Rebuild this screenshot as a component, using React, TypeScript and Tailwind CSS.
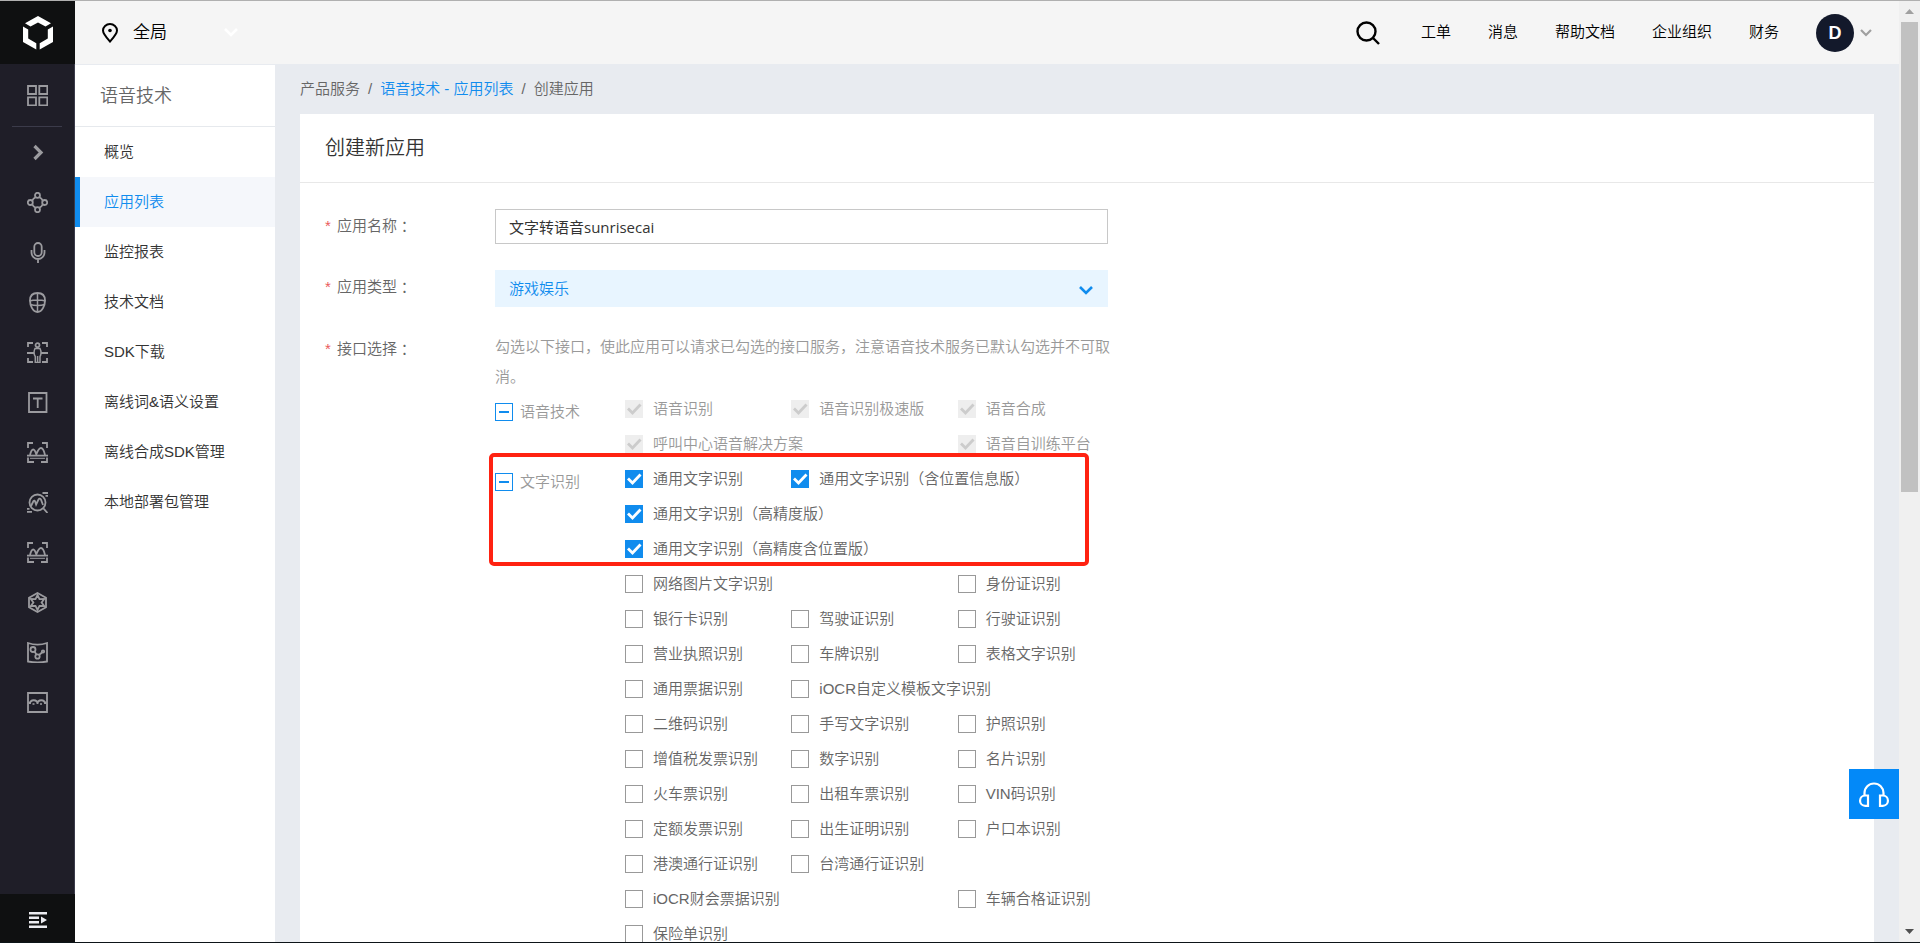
import React, { useState } from 'react';
import clsx from 'clsx';

const topLinks = ['工单', '消息', '帮助文档', '企业组织', '财务'];

const menuItems = [
  '概览',
  '应用列表',
  '监控报表',
  '技术文档',
  'SDK下载',
  '离线词&语义设置',
  '离线合成SDK管理',
  '本地部署包管理',
];

type Option = { name: string; span?: number };

const speechOptions: Option[] = [
  { name: '语音识别' },
  { name: '语音识别极速版' },
  { name: '语音合成' },
  { name: '呼叫中心语音解决方案', span: 2 },
  { name: '语音自训练平台' },
];

const ocrOptions: Option[] = [
  { name: '通用文字识别' },
  { name: '通用文字识别（含位置信息版）', span: 2 },
  { name: '通用文字识别（高精度版）', span: 3 },
  { name: '通用文字识别（高精度含位置版）', span: 3 },
  { name: '网络图片文字识别', span: 2 },
  { name: '身份证识别' },
  { name: '银行卡识别' },
  { name: '驾驶证识别' },
  { name: '行驶证识别' },
  { name: '营业执照识别' },
  { name: '车牌识别' },
  { name: '表格文字识别' },
  { name: '通用票据识别' },
  { name: 'iOCR自定义模板文字识别', span: 2 },
  { name: '二维码识别' },
  { name: '手写文字识别' },
  { name: '护照识别' },
  { name: '增值税发票识别' },
  { name: '数字识别' },
  { name: '名片识别' },
  { name: '火车票识别' },
  { name: '出租车票识别' },
  { name: 'VIN码识别' },
  { name: '定额发票识别' },
  { name: '出生证明识别' },
  { name: '户口本识别' },
  { name: '港澳通行证识别' },
  { name: '台湾通行证识别', span: 2 },
  { name: 'iOCR财会票据识别', span: 2 },
  { name: '车辆合格证识别' },
  { name: '保险单识别', span: 3 },
];

const scanCorners = 'M1 5V1h5M15 1h5v4M1 16v4h5M15 20h5v-4';

const ImageScan = (
  <>
    <path d="M1 6V1h5M15 1h5v5M1 15.5V20h6M14 20h6v-4.500" />
    <path d="M0 13.600h21" />
    <path d="M3 13c1-4 2-5.500 3.200-5.500S8.500 9.500 9.500 13M9.500 12c1.500-4 3-6 4.500-6s3 2.500 4 7" />
    <path d="M3 16.300h15" strokeWidth="1" />
  </>
);

// 21x21 icons of the product rail, top to bottom
const railIcons: { label: string; icon: React.ReactNode }[] = [
  {
    label: '知识图谱',
    icon: (
      <>
        <circle cx="10.5" cy="3.300" r="2.500" />
        <circle cx="10.5" cy="17.700" r="2.500" />
        <circle cx="3.300" cy="10.5" r="2.500" />
        <circle cx="17.700" cy="10.5" r="2.500" />
        <path d="M8.600 5.200C7 6 6 7 5.200 8.600M12.400 5.200c1.600.8 2.600 1.800 3.400 3.400M5.200 12.400c.8 1.600 1.800 2.600 3.400 3.400M15.800 12.400c-.8 1.600-1.800 2.600-3.400 3.400" />
      </>
    ),
  },
  {
    label: '语音技术',
    icon: (
      <>
        <rect x="7.300" y="1" width="7.400" height="13" rx="3.700" />
        <path d="M4.500 8v2.500a6.500 6.500 0 0 0 13 0V8M11 17v4" />
      </>
    ),
  },
  {
    label: '人脸识别',
    icon: (
      <>
        <path d="M10.500 1C5.500 1 3 4 3 8.500S5.500 20 10.500 20 18 13 18 8.500 15.500 1 10.500 1Z" />
        <path d="M10.500 1v19M2.500 9c4-1.500 12-1.500 16 0M3.500 12.500c3.500 1.200 10.500 1.200 14 0" strokeWidth="1.500" />
      </>
    ),
  },
  {
    label: '人体分析',
    icon: (
      <>
        <path d={scanCorners} />
        <path d="M0 11h7M14 11h7" />
        <circle cx="10.500" cy="3.200" r="2" />
        <path d="M8 6.500h5c1.200 2.500 1.200 6 0 8.200V20.500H8.300v-5.800c-1.500-2.500-1.500-5.700-.3-8.200ZM10.600 14v6" strokeWidth="1.500" />
      </>
    ),
  },
  {
    label: '文字识别',
    icon: (
      <>
        <path d="M2 1h17.500v19H2zM6 6.500h9.500M10.700 6.500V16" />
      </>
    ),
  },
  { label: '图像识别', icon: ImageScan },
  {
    label: '图像搜索',
    icon: (
      <>
        <circle cx="10.500" cy="10.500" r="8" />
        <path d="M16.500 16.500 20.500 21M15.500 1H21M18.500 3.800H21M0 16.800h2.500M0 19.800h5" />
        <path d="M4 14l2.500-5c.6-.8 1.300-.4 1.600.5l1 3L11.500 7.500c.8-1.300 2-1 2.500.2l2 5.300" />
      </>
    ),
  },
  { label: '图像审核', icon: ImageScan },
  {
    label: '智能创作',
    icon: (
      <>
        <path d="M10.500 1 19 5.800v9.400L10.500 20 2 15.200V5.800Z" />
        <path d="m10.500 3 2 4.200 4.700-.2-2.600 3.500 2.600 3.500-4.700-.2-2 4.200-2-4.200-4.700.2 2.600-3.500L3.800 7l4.700.2Z" strokeWidth="1.800" />
      </>
    ),
  },
  {
    label: '机器学习',
    icon: (
      <>
        <path d="M1 1c6 2 13 2 19 0v18.500c-6 1.200-13 1.200-19 0Z" />
        <circle cx="6" cy="7.500" r="2.500" />
        <circle cx="10.500" cy="14.500" r="2.200" />
        <circle cx="16" cy="9.500" r="1.200" />
        <path d="m7.500 9.500 2 3M12 13l3-2.500" />
      </>
    ),
  },
  {
    label: '视频技术',
    icon: (
      <>
        <path d="M1 1h19v19H1z" />
        <path d="M1.500 10.500c1 0 1.500.5 1.500 1.500 0-5 7.500-5 7.500 0 0-5 7.500-5 7.500 0 0-1 .5-1.500 1.500-1.500" />
        <path d="M5.500 12h2M13 12h2" strokeWidth="1.500" />
      </>
    ),
  },
];

function Rail() {
  return (
    <nav className="flex w-[75px] shrink-0 flex-col bg-[#1f1e28] text-[#9b9b9f]">
      <a href="#" aria-label="首页" className="flex h-[63px] shrink-0 items-center justify-center bg-[#0f1011]">
        <svg width="30" height="34" viewBox="0 0 30 34" fill="#fff">
          <path d="M15 0 28 7.200 22.500 10.500 15 6.500 7.500 10.500 2 7.200Z" />
          <path d="M0 10.500 5.200 13.500V22.500L13.300 27.200V33.500L0 26Z" />
          <path d="M30 10.500 24.800 13.500V22.500L16.700 27.200V33.500L30 26Z" />
        </svg>
      </a>
      <div className="flex grow flex-col items-center border-r border-[#3b3b4a]">
        <button aria-label="全部产品" className="flex h-[62px] items-center">
          <svg width="21" height="21" viewBox="0 0 21 21" fill="none" stroke="currentColor" strokeWidth="1.800">
            <path d="M1 1h8v8H1zM12.300 1h8v8h-8zM1 12.300h8v8H1zM12.300 12.300h8v8h-8z" />
          </svg>
        </button>
        <div className="h-px w-[50px] bg-[#3b3b4a]" />
        <button aria-label="展开" className="flex h-[50px] items-center">
          <svg width="21" height="21" viewBox="0 0 21 21" fill="none" stroke="currentColor" strokeWidth="3.200">
            <path d="m7.500 4 6.500 6.500L7.500 17" />
          </svg>
        </button>
        {railIcons.map((item) => (
          <a key={item.label} href="#" aria-label={item.label} className="flex h-[50px] items-center">
            <svg width="21" height="21" viewBox="0 0 21 21" fill="none" stroke="currentColor" strokeWidth="1.800">
              {item.icon}
            </svg>
          </a>
        ))}
      </div>
      <button aria-label="展开导航" className="flex h-12 shrink-0 items-center justify-center bg-[#0f1011] pt-1">
        <svg width="18" height="16" viewBox="0 0 18 16" fill="#ebebf0">
          <path d="M0 0h18v2.600H0zM0 4.500h10v2.600H0zM0 8.900h10v2.600H0zM0 13.400h18V16H0zM12 4.500 18 8l-6 3.500z" />
        </svg>
      </button>
    </nav>
  );
}

function Chevron({ className }: { className?: string }) {
  return (
    <svg width="14" height="9" viewBox="0 0 14 9" fill="none" stroke="currentColor" strokeWidth="2.600" className={className}>
      <path d="m1 1 6 6 6-6" />
    </svg>
  );
}

function Header() {
  return (
    <header className="flex h-[63px] shrink-0 items-center bg-[#f5f5f5] px-[27px] text-black">
      <button className="flex items-center text-[17px]">
        <svg width="16" height="20" viewBox="0 0 16 20" fill="none" stroke="#000" strokeWidth="2">
          <path d="M8 18.500C4 14 1 10.800 1 7.500a7 6.500 0 0 1 14 0c0 3.300-3 6.500-7 11Z" />
          <circle cx="8" cy="7.500" r="1.800" fill="#000" stroke="none" />
        </svg>
        <span className="ml-[15px]">全局</span>
        <Chevron className="ml-[57px] text-white" />
      </button>
      <div className="ml-auto flex items-center gap-[37px] text-[15px]">
        <button aria-label="搜索" className="mr-1">
          <svg width="24" height="24" viewBox="0 0 24 24" fill="none" stroke="#000" strokeWidth="2.400">
            <circle cx="10.500" cy="10.500" r="9" />
            <path d="m17 17 6 6" />
          </svg>
        </button>
        {topLinks.map((link) => (
          <a key={link} href="#">
            {link}
          </a>
        ))}
        <button className="flex items-center gap-1.5 text-[#a0a0a0]">
          <span className="flex size-[38px] items-center justify-center rounded-full bg-[#13192b] text-lg font-bold text-white">
            D
          </span>
          <svg width="12" height="8" viewBox="0 0 12 8" fill="none" stroke="currentColor" strokeWidth="2.200">
            <path d="m1 1 5 5 5-5" />
          </svg>
        </button>
      </div>
    </header>
  );
}

function SideMenu() {
  return (
    <aside className="w-[200px] shrink-0 border-t border-[#e8ebf0] bg-white">
      <h2 className="flex h-[62px] items-center border-b border-[#e6e9ed] pl-[25px] text-lg text-[#666]">语音技术</h2>
      <ul className="text-[15px] text-[#333]">
        {menuItems.map((item) => (
          <li key={item}>
            <a
              href="#"
              className={clsx(
                'flex h-[50px] items-center border-l-5 pl-6',
                item === '应用列表' ? 'border-[#108cee] bg-[#f5f7fb] text-[#108cee]' : 'border-transparent'
              )}
            >
              {item}
            </a>
          </li>
        ))}
      </ul>
    </aside>
  );
}

const spanClass: Record<number, string> = { 1: 'col-span-1', 2: 'col-span-2', 3: 'col-span-3' };

function CheckItem({
  option,
  checked,
  disabled,
  onChange,
}: {
  option: Option;
  checked: boolean;
  disabled?: boolean;
  onChange?: () => void;
}) {
  return (
    <label
      className={clsx(
        'flex h-[35px] items-center gap-2.5 whitespace-nowrap pb-px',
        spanClass[option.span ?? 1],
        disabled ? 'text-[#999]' : 'text-[#666]'
      )}
    >
      <span className="relative size-[18px]">
        <input
          type="checkbox"
          checked={checked}
          disabled={disabled}
          onChange={onChange}
          className="block size-[18px] appearance-none border border-[#999] bg-white checked:border-[#108cee] checked:bg-[#108cee] disabled:border-[#eee] disabled:bg-[#eee]"
        />
        {checked && (
          <svg
            viewBox="0 0 18 18"
            fill="none"
            strokeWidth="2.800"
            className={clsx('pointer-events-none absolute inset-0', disabled ? 'stroke-[#ccc]' : 'stroke-white')}
          >
            <path d="m3 8.500 4.500 4.500L15.500 4.500" />
          </svg>
        )}
      </span>
      {option.name}
    </label>
  );
}

function OptionGroup({ title, children }: { title: string; children: React.ReactNode }) {
  return (
    <div className="flex">
      <label className="flex h-10 w-[130px] shrink-0 items-center gap-[7px] text-[#999]">
        <span className="relative size-[18px]">
          <input type="checkbox" className="block size-[18px] appearance-none border border-[#108cee] bg-white" />
          <span className="pointer-events-none absolute left-1 top-2 h-0.5 w-2.5 bg-[#108cee]" />
        </span>
        {title}
      </label>
      <div className="grid w-[499px] shrink-0 grid-cols-3">{children}</div>
    </div>
  );
}

function FieldLabel({ htmlFor, children }: { htmlFor?: string; children: string }) {
  return (
    <label htmlFor={htmlFor} className="flex h-[35px] w-[170px] shrink-0 items-center text-[#666]">
      <span className="w-3 text-[#ea5a5a]">*</span>
      {children}
      <span className="font-['Noto_Sans_CJK_TC',sans-serif]">：</span>
    </label>
  );
}

function AppForm() {
  const [name, setName] = useState('文字转语音sunrisecai');
  const [selected, setSelected] = useState(ocrOptions.slice(0, 4).map((o) => o.name));

  const toggle = (option: string) =>
    setSelected((prev) => (prev.includes(option) ? prev.filter((o) => o !== option) : [...prev, option]));

  return (
    <form className="pl-[25px] pt-[26px] text-[15px]">
      <div className="flex">
        <FieldLabel htmlFor="app-name">应用名称</FieldLabel>
        <input
          id="app-name"
          type="text"
          value={name}
          onChange={(e) => setName(e.target.value)}
          className="h-[35px] w-[613px] border border-[#c8c8c8] px-[13px] font-['Open_Sans','Noto_Sans_CJK_SC',sans-serif] font-normal text-[#333]"
        />
      </div>

      <div className="mt-[26px] flex">
        <FieldLabel htmlFor="app-type">应用类型</FieldLabel>
        <div className="relative w-[613px]">
          <select
            id="app-type"
            className="block h-[37px] w-full appearance-none bg-[#e8f5ff] px-3.5 pt-0.5 text-[#108cee]"
          >
            <option>游戏娱乐</option>
          </select>
          <Chevron className="pointer-events-none absolute right-[15px] top-4 text-[#108cee]" />
        </div>
      </div>

      <div className="mt-[25px] flex">
        <FieldLabel>接口选择</FieldLabel>
        <div className="relative w-[620px]">
          <p className="leading-[30px] text-[#999]">
            勾选以下接口，使此应用可以请求已勾选的接口服务，注意语音技术服务已默认勾选并不可取消。
          </p>
          <OptionGroup title="语音技术">
            {speechOptions.map((option) => (
              <CheckItem key={option.name} option={option} checked disabled />
            ))}
          </OptionGroup>
          <OptionGroup title="文字识别">
            {ocrOptions.map((option) => (
              <CheckItem
                key={option.name}
                option={option}
                checked={selected.includes(option.name)}
                onChange={() => toggle(option.name)}
              />
            ))}
          </OptionGroup>
          {/* highlight frame over the checked OCR rows */}
          <div className="pointer-events-none absolute -left-1.5 top-[121px] h-[113px] w-[600px] rounded-[5px] border-4 border-[#ff2211]" />
        </div>
      </div>
    </form>
  );
}

function Scrollbar() {
  return (
    <div className="flex w-[21px] shrink-0 flex-col items-center bg-[#f0f0f0]" aria-hidden="true">
      <svg width="9" height="5" viewBox="0 0 9 5" fill="#a0a0a0" className="my-2">
        <path d="M4.500 0 9 5H0z" />
      </svg>
      <div className="h-[470px] w-[17px] bg-[#c1c1c1]" />
      <svg width="9" height="5" viewBox="0 0 9 5" fill="#505050" className="mb-2 mt-auto">
        <path d="M0 0h9L4.500 5z" />
      </svg>
    </div>
  );
}

export default function App() {
  return (
    <div className="flex h-screen overflow-hidden border-b border-t border-b-[#0d1418] border-t-[#b0b0b0] bg-[#e8ebf0] font-['Liberation_Sans','Noto_Sans_CJK_SC',sans-serif] font-[350]">
      <Rail />
      <div className="relative flex min-w-0 grow flex-col">
        <Header />
        <div className="flex min-h-0 grow">
          <SideMenu />
          <main className="flex min-w-0 grow flex-col overflow-hidden px-[25px]">
            <div className="flex h-[50px] shrink-0 items-center gap-2 text-[15px] text-[#666]">
              <span>产品服务</span>
              <span>/</span>
              <a href="#" className="text-[#108cee]">
                语音技术 - 应用列表
              </a>
              <span>/</span>
              <span>创建应用</span>
            </div>
            <section className="grow bg-white">
              <h1 className="flex h-[69px] items-center border-b border-[#e8e8e8] pl-[25px] text-xl text-[#333]">
                创建新应用
              </h1>
              <AppForm />
            </section>
          </main>
        </div>
        <button
          aria-label="在线客服"
          className="absolute bottom-[123px] right-0 flex size-[50px] items-center justify-center bg-[#0389f8] pt-0.5"
        >
          <svg width="32" height="26" viewBox="0 0 32 26" fill="none" stroke="#fff" strokeWidth="2.200">
            <path d="M6.500 13V11a9.500 9.500 0 0 1 19 0v2" />
            <path d="M10 13.500v10.300H7.200A5.100 5.100 0 0 1 7.200 13.500ZM22 13.500v10.300h2.800a5.100 5.100 0 0 0 0-10.300Z" />
          </svg>
        </button>
      </div>
      <Scrollbar />
    </div>
  );
}
